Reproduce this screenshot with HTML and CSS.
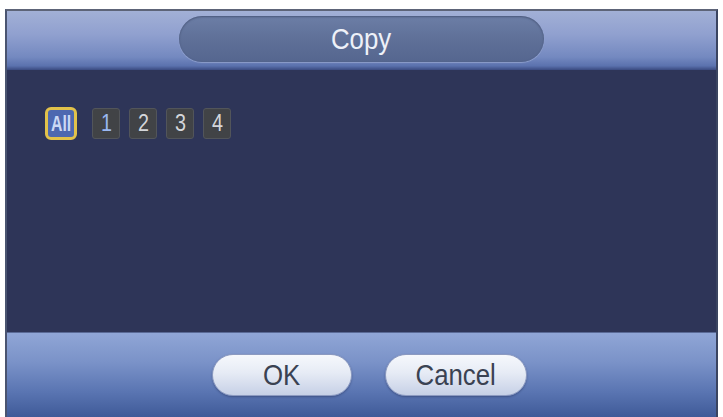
FILE: index.html
```html
<!DOCTYPE html>
<html>
<head>
<meta charset="utf-8">
<link rel="stylesheet" href="styles.css">
</head>
<body>
<div class="dialog">
  <div class="header">
    <div class="title"><span class="narrow">Copy</span></div>
  </div>
  <div class="content">
    <div class="channels">
      <span class="chk all"><span class="narrow">All</span></span>
      <span class="chk sel"><span class="narrow">1</span></span>
      <span class="chk"><span class="narrow">2</span></span>
      <span class="chk"><span class="narrow">3</span></span>
      <span class="chk"><span class="narrow">4</span></span>
    </div>
  </div>
  <div class="footer">
    <button class="btn ok"><span class="narrow">OK</span></button>
    <button class="btn cancel"><span class="narrow">Cancel</span></button>
  </div>
</div>
</body>
</html>
```
FILE: styles.css
```css
html, body {
  margin: 0;
  padding: 0;
  background: #ffffff;
  width: 723px;
  height: 417px;
  overflow: hidden;
}
body {
  padding: 9px 0 0 5px;
  box-sizing: border-box;
  font-family: "Liberation Sans", Arial, sans-serif;
}
.narrow {
  display: inline-block;
  transform: scaleX(0.86);
}
.dialog {
  width: 713px;
  height: 408px;
  display: flex;
  flex-direction: column;
  border-top: 2px solid #5d6478;
  border-left: 2px solid #4a5470;
  border-right: 2px solid #3a4460;
  box-sizing: border-box;
  background: #2e3558;
}
.header {
  height: 59px;
  display: flex;
  align-items: center;
  justify-content: center;
  padding-bottom: 4px;
  box-sizing: border-box;
  background: linear-gradient(to bottom, #a2b0d6 0%, #90a0cf 40%, #7489c0 78%, #5b72ae 93%, #3a4a80 100%);
}
.title {
  width: 365px;
  height: 46px;
  border-radius: 23px;
  display: flex;
  align-items: center;
  justify-content: center;
  color: #eef1f8;
  font-size: 30px;
  background: linear-gradient(to bottom, #6c7ea6 0%, #5f7098 50%, #55668f 100%);
  box-shadow: inset 0 1px 2px rgba(40,50,80,0.5), 0 1px 1px rgba(200,210,235,0.4);
}
.content {
  flex: 1;
  padding: 37px 0 0 38px;
  background: #2e3558;
}
.channels {
  display: flex;
  align-items: center;
  gap: 9px;
}
.chk {
  width: 28px;
  height: 31px;
  box-sizing: border-box;
  border-radius: 3px;
  background: #414346;
  border: 1px solid #52555a;
  color: #d4d6da;
  font-size: 23px;
  display: flex;
  align-items: center;
  justify-content: center;
}
.chk.all {
  width: 32px;
  height: 33px;
  border: 3px solid #e2c24a;
  border-radius: 6px;
  background: #4d68b0;
  color: #cbd8f4;
  font-size: 22px;
  font-weight: bold;
  margin-right: 6px;
}
.chk.all .narrow {
  transform: scaleX(0.72);
}
.chk.sel {
  color: #9ab8f2;
}
.footer {
  height: 85px;
  display: flex;
  align-items: center;
  justify-content: center;
  gap: 33px;
  padding-left: 16px;
  box-sizing: border-box;
  border-top: 1px solid #5a6a96;
  background: linear-gradient(to bottom, #90a6d6 0%, #7a92c8 35%, #5a75b2 70%, #3f5a98 100%);
}
.btn {
  height: 42px;
  border-radius: 21px;
  border: 1px solid #8c9ac0;
  font-family: "Liberation Sans", Arial, sans-serif;
  font-size: 30px;
  color: #3a4252;
  background: linear-gradient(to bottom, #f6f8fc 0%, #e6ebf5 45%, #c6d0e6 100%);
  box-shadow: 0 1px 2px rgba(30,40,80,0.4);
  padding: 0;
  line-height: 40px;
}
.btn.ok { width: 140px; }
.btn.cancel { width: 142px; }
```
